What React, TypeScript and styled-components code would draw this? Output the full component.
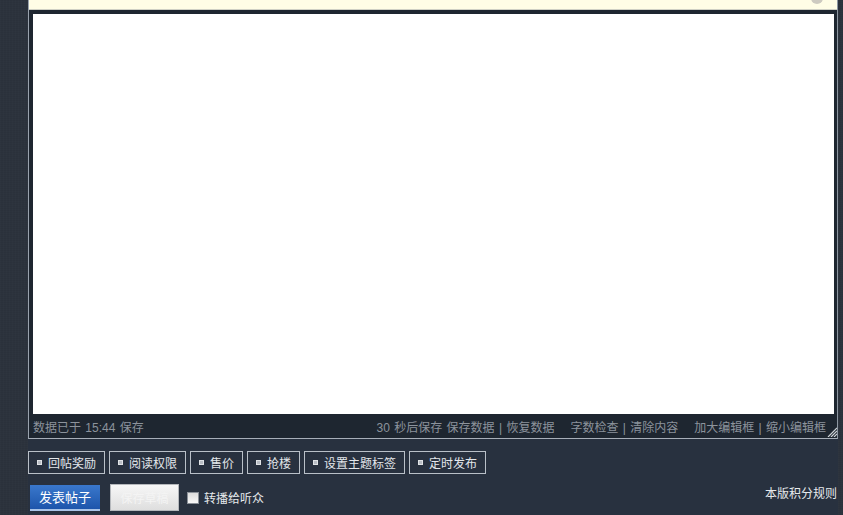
import React from 'react';
import styled, { createGlobalStyle } from 'styled-components';

const GlobalStyle = createGlobalStyle`
	html, body {
		margin: 0;
		padding: 0;
		background: #29313c;
	}
	body {
		font-family: "Liberation Sans", "Noto Sans CJK SC", sans-serif;
		overflow: hidden;
	}
`

const toolItems = ['回帖奖励', '阅读权限', '售价', '抢楼', '设置主题标签', '定时发布'];

const App: React.FC = (): JSX.Element => {
	return (
		<>
			<GlobalStyle />
			<Page>
				<Gutter />
				<Main>
					<EditorFrame>
						<NoticeBar>
							<NoticeDot />
						</NoticeBar>
						<EditorInner>
							<EditArea />
						</EditorInner>
						<StatusBar>
							<span>数据已于 15:44 保存</span>
							<StatusRight>
								<span>30 秒后保存 保存数据 | 恢复数据</span>
								<span>字数检查 | 清除内容</span>
								<span>加大编辑框 | 缩小编辑框</span>
								<Grip viewBox="0 0 10 10" width="10" height="10">
									<path d="M1 10 L10 1 M4 10 L10 4 M7 10 L10 7" stroke="#d0d4d8" strokeWidth="1.2" />
								</Grip>
							</StatusRight>
						</StatusBar>
					</EditorFrame>
					<ToolRow>
						{toolItems.map((item) => (
							<ToolButton key={item}>
								<Bullet />
								{item}
							</ToolButton>
						))}
					</ToolRow>
					<ActionRow>
						<ActionLeft>
							<SubmitButton>发表帖子</SubmitButton>
							<DraftButton>保存草稿</DraftButton>
							<CheckLabel>
								<CheckBox />
								转播给听众
							</CheckLabel>
						</ActionLeft>
						<RuleLink>本版积分规则</RuleLink>
					</ActionRow>
				</Main>
				<RightGutter />
			</Page>
		</>
	);
}

const Page = styled.div`
	display: flex;
	width: 843px;
	height: 515px;
	background: #28313f;
`

const Gutter = styled.div`
	width: 28px;
	flex-shrink: 0;
	background-color: #2c333d;
	background-image: repeating-linear-gradient(90deg, rgba(255,255,255,0.012) 0 1px, transparent 1px 3px),
		repeating-linear-gradient(0deg, rgba(0,0,0,0.04) 0 1px, transparent 1px 2px);
`

const RightGutter = styled(Gutter)`
	width: 5px;
`

const Main = styled.div`
	width: 810px;
	display: flex;
	flex-direction: column;
`

const EditorFrame = styled.div`
	width: 808px;
	border-left: 1px solid #9aa3ae;
	border-right: 1px solid #8d96a1;
	border-bottom: 1px solid #a7aeb8;
	background: #1e2630;
	display: flex;
	flex-direction: column;
`

const NoticeBar = styled.div`
	height: 9px;
	background: #fffde6;
	border-bottom: 1px solid #cfd0c4;
	display: flex;
	justify-content: flex-end;
	overflow: hidden;
	padding-right: 14px;
`

const NoticeDot = styled.div`
	width: 12px;
	height: 12px;
	border-radius: 50%;
	background: #cdcac0;
	margin-top: -8px;
`

const EditorInner = styled.div`
	padding: 4px 3px 0 4px;
`

const EditArea = styled.div`
	height: 400px;
	background: #ffffff;
`

const StatusBar = styled.div`
	height: 24px;
	display: flex;
	align-items: center;
	justify-content: space-between;
	padding: 0 0 0 4px;
	font-size: 12px;
	word-spacing: 1px;
	color: #8c939c;
	font-family: "Liberation Sans", "Noto Sans CJK SC", sans-serif;
`

const StatusRight = styled.div`
	display: flex;
	align-items: center;
	gap: 16px;
	height: 100%;
`

const Grip = styled.svg`
	align-self: flex-end;
	margin-left: -15px;
	margin-bottom: 1px;
`

const ToolRow = styled.div`
	display: flex;
	gap: 4px;
	margin-top: 12px;
`

const ToolButton = styled.div`
	height: 21px;
	display: flex;
	align-items: center;
	gap: 6px;
	padding: 0 8px 0 8px;
	border: 1px solid #b9c0c8;
	color: #e3e7eb;
	font-size: 12px;
	font-family: "Noto Sans CJK SC", sans-serif;
`

const Bullet = styled.span`
	width: 5px;
	height: 5px;
	background: #b8bdc4;
	border: 1px solid #e0e3e6;
	box-sizing: border-box;
`

const ActionRow = styled.div`
	display: flex;
	align-items: center;
	justify-content: space-between;
	margin-top: 10px;
`

const ActionLeft = styled.div`
	display: flex;
	align-items: center;
`

const SubmitButton = styled.div`
	width: 70px;
	height: 24px;
	margin-left: 2px;
	display: flex;
	align-items: center;
	justify-content: center;
	background: linear-gradient(#3a78cc, #1d55ab);
	border-bottom: 2px solid #a9c4e8;
	color: #ffffff;
	font-size: 13px;
	font-family: "Noto Sans CJK SC", sans-serif;
`

const DraftButton = styled.div`
	width: 67px;
	height: 25px;
	margin-left: 10px;
	display: flex;
	align-items: center;
	justify-content: center;
	background: linear-gradient(#f7f7f7, #dedede);
	border: 1px solid #b5b8bc;
	color: #f4f4f4;
	font-size: 12px;
	font-family: "Noto Sans CJK SC", sans-serif;
`

const CheckLabel = styled.label`
	display: flex;
	align-items: center;
	gap: 5px;
	margin-left: 8px;
	color: #e6e9ec;
	font-size: 12px;
	font-family: "Noto Sans CJK SC", sans-serif;
`

const CheckBox = styled.span`
	width: 10px;
	height: 10px;
	border: 1px solid #8a9098;
	background: linear-gradient(#dcdcdc, #f8f8f8);
`

const RuleLink = styled.span`
	color: #e6e9ec;
	font-size: 12px;
	font-family: "Noto Sans CJK SC", sans-serif;
	margin-right: 1px;
	margin-top: -10px;
`

export default App;
